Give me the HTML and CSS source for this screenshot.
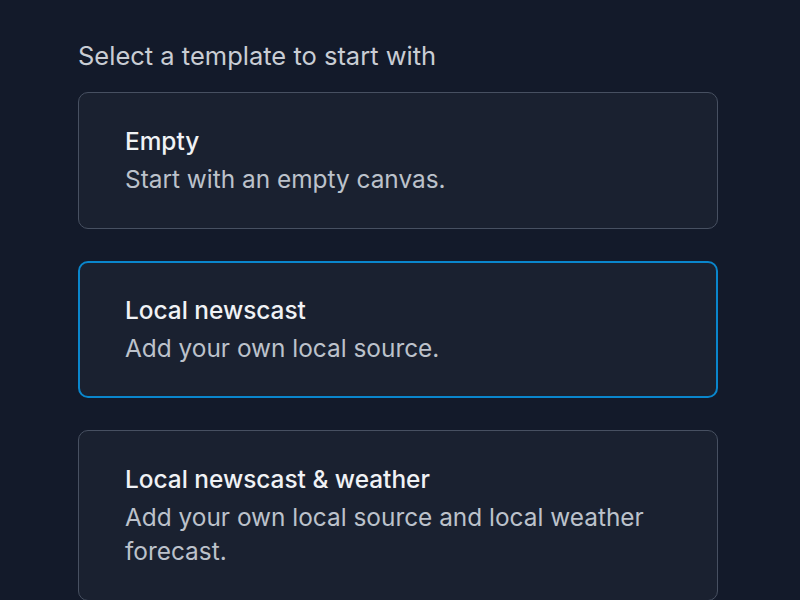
FILE: index.html
```html
<!DOCTYPE html>
<html lang="en">
<head>
<meta charset="utf-8">
<link rel="stylesheet" href="styles.css">
</head>
<body>
<main class="picker">
  <h2 class="picker-title">Select a template to start with</h2>
  <div class="options">
    <div class="option">
      <div class="option-name">Empty</div>
      <div class="option-desc">Start with an empty canvas.</div>
    </div>
    <div class="option selected">
      <div class="option-name">Local newscast</div>
      <div class="option-desc">Add your own local source.</div>
    </div>
    <div class="option">
      <div class="option-name">Local newscast &amp; weather</div>
      <div class="option-desc">Add your own local source and local weather forecast.</div>
    </div>
  </div>
</main>
</body>
</html>
```
FILE: styles.css
```css
html, body {
  margin: 0;
  padding: 0;
  background: #131a2a;
  height: 100%;
  overflow: hidden;
}
body {
  font-family: Inter, "Noto Sans", sans-serif;
}
.picker {
  width: 640px;
  margin: 0 0 0 78px;
  padding-top: 40px;
}
.picker-title {
  margin: 0 0 20px;
  font-size: 25.5px;
  line-height: 32px;
  font-weight: 400;
  color: #c9cdd4;
}
.options {
  display: flex;
  flex-direction: column;
  gap: 32px;
}
.option {
  background: #1a2130;
  border: 1px solid #475061;
  border-radius: 10px;
  padding: 31px 46px 32px;
}
.option.selected {
  border: 2px solid #0a86cc;
  padding: 30px 45px 31px;
}
.option-name {
  font-size: 24.4px;
  line-height: 34px;
  font-weight: 500;
  color: #f0f2f5;
  margin-bottom: 4px;
}
.option-desc {
  font-size: 24.4px;
  line-height: 34px;
  color: #bcc2cb;
}
```
